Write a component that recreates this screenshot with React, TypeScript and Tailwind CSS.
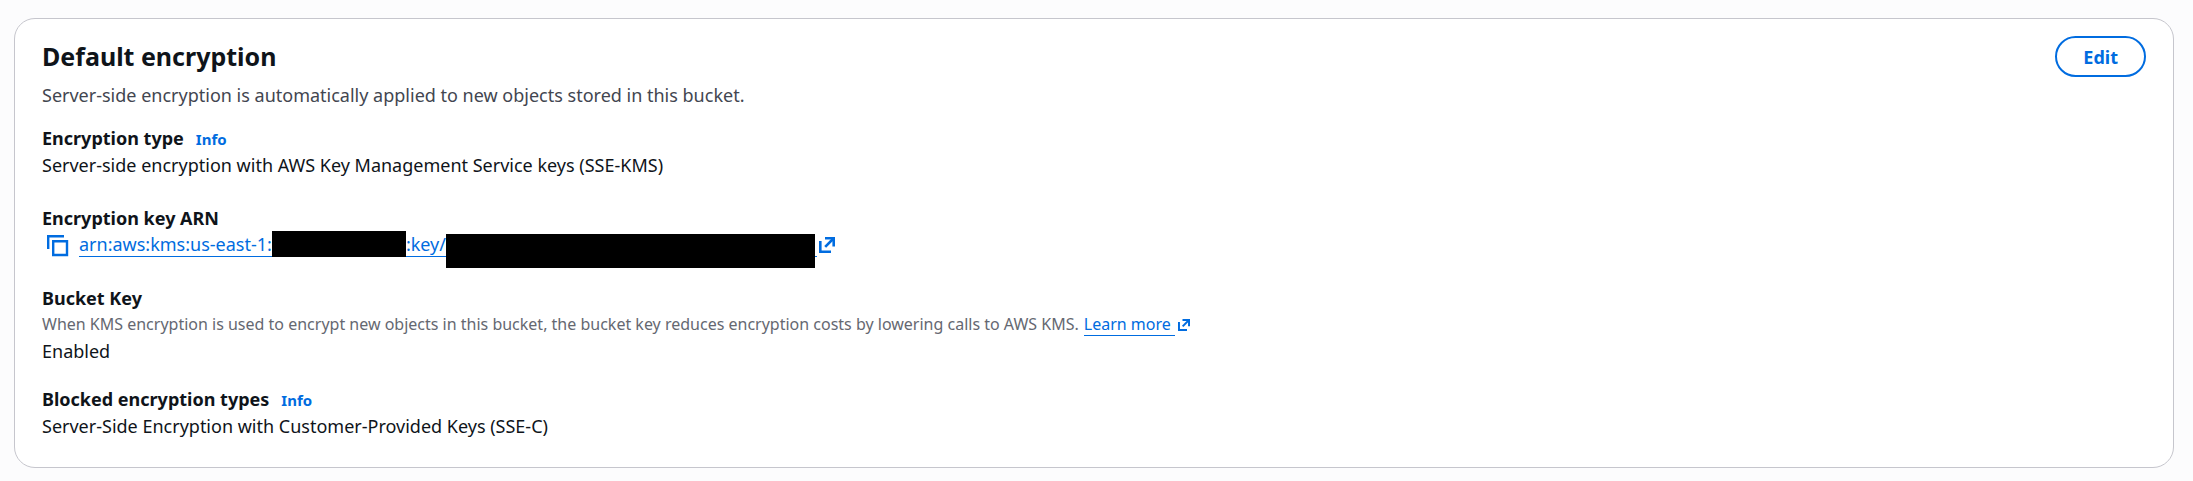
import React from 'react';

interface FieldProps {
  label: string;
  info?: boolean;
  children: React.ReactNode;
}

const ExternalIcon: React.FC<{ className: string }> = ({ className }) => (
  <svg viewBox="0 0 16 16" fill="none" stroke="currentColor" strokeWidth="2.6" className={className} aria-hidden="true">
    <path d="M1.3 4v10.7H12" />
    <path d="M6 1.3h8.7V9.5" />
    <path d="M14 2 6.2 9.8" />
  </svg>
);

const CopyIcon = () => (
  <svg viewBox="0 0 22 22" fill="none" stroke="currentColor" strokeWidth="2.4" className="size-[22px]" aria-hidden="true">
    <path d="M1.2 14V1.2H17" />
    <path d="M6.2 6.2H20V20H6.2Z" />
  </svg>
);

const Field: React.FC<FieldProps> = ({ label, info, children }) => (
  <div className="min-h-[58px]">
    <dt className="flex items-baseline gap-3 font-bold">
      {label}
      {info && <a href="#info" className="text-[15px] text-[#006ce0]">Info</a>}
    </dt>
    {children}
  </div>
);

export default function App() {
  return (
    <main className="min-h-screen bg-[#fcfcfd] pt-[18px] pr-[19px] pb-3 pl-[14px] font-['Noto_Sans',sans-serif] text-[18px] leading-[26px] text-[#0f141a]">
      <section className="rounded-[21px] border border-[#c6c6cd] bg-white px-[27px] pt-[17px] pb-[23px]">
        <header className="flex items-start justify-between">
          <div>
            <h2 className="text-[25px] leading-[40px] font-bold">Default encryption</h2>
            <p className="mt-[6px] text-[#424650]">Server-side encryption is automatically applied to new objects stored in this bucket.</p>
          </div>
          <button className="h-[41px] rounded-full border-2 border-[#006ce0] px-[26px] font-bold text-[#006ce0]">Edit</button>
        </header>

        <dl className="mt-[17px] flex flex-col gap-[22px]">
          <Field label="Encryption type" info>
            <dd>Server-side encryption with AWS Key Management Service keys (SSE-KMS)</dd>
          </Field>

          <Field label="Encryption key ARN">
            <dd className="flex h-[26px] items-start pl-[5px] text-[#006ce0]">
              <button aria-label="Copy ARN" className="mt-1 mr-[10px]"><CopyIcon /></button>
              <a href="#key" className="flex items-start">
                <span className="flex h-[26px] items-start border-b border-[#006ce0] pr-[2px]">
                  <span>arn:aws:kms:us-east-1:</span>
                  <span className="h-[26px] w-[134px] bg-black" />
                  <span>:key/</span>
                  <span className="mt-[3px] h-[34px] w-[369px] bg-black" />
                </span>
                <ExternalIcon className="mt-[6px] ml-[2px] size-4" />
              </a>
            </dd>
          </Field>

          <Field label="Bucket Key">
            <dd className="flex items-center text-[16px] leading-[27px] text-[#656871]">
              When KMS encryption is used to encrypt new objects in this bucket, the bucket key reduces encryption costs by lowering calls to AWS KMS.
              <a href="#learn" className="ml-[5px] flex items-center text-[#006ce0]">
                <span className="border-b border-[#006ce0] pr-1 leading-[21px]">Learn more</span>
                <ExternalIcon className="ml-[3px] size-3" />
              </a>
            </dd>
            <dd>Enabled</dd>
          </Field>

          <Field label="Blocked encryption types" info>
            <dd>Server-Side Encryption with Customer-Provided Keys (SSE-C)</dd>
          </Field>
        </dl>
      </section>
    </main>
  );
}
